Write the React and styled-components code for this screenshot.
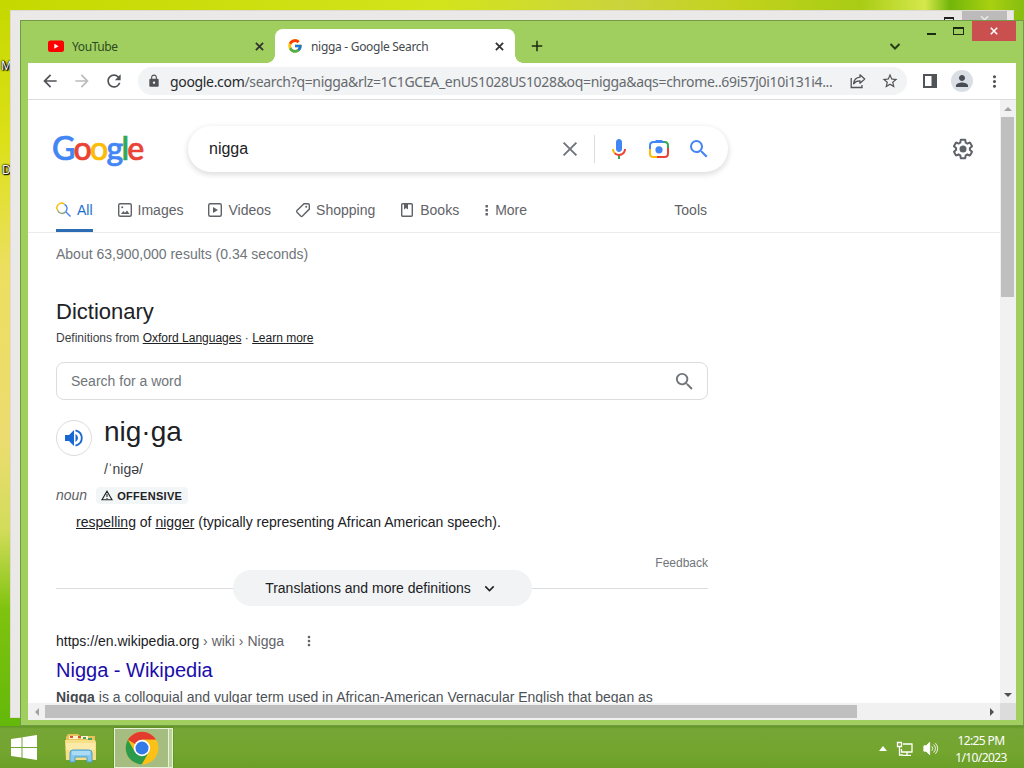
import * as React from "react";
import styled, { createGlobalStyle, css } from "styled-components";
import {
  MdArrowBack,
  MdArrowForward,
  MdRefresh,
  MdLock,
  MdStarBorder,
  MdPerson,
  MdMoreVert,
  MdAdd,
  MdSearch,
  MdKeyboardArrowDown,
} from "react-icons/md";
import { FcGoogle } from "react-icons/fc";

const GlobalStyle = createGlobalStyle`
  * { box-sizing: border-box; }
  body {
    margin: 0;
    overflow: hidden;
    font-family: "Liberation Sans", Arial, sans-serif;
  }
`;

const Desktop = styled.div`
  position: relative;
  width: 1024px;
  height: 768px;
  overflow: hidden;
  background: linear-gradient(180deg, #c5d800 0, #dce018 140px, #ecdf60 270px, #ecdc70 440px, #d2dc5a 530px, #7fc30e 610px, #63b80a 727px);
`;
const SkyStrip = styled.div`
  height: 20px;
  background: linear-gradient(90deg, #c5d900 0, #d3e41c 440px, #cbd43c 620px, #c2d21c 740px, #a8cc14 860px, #d6e84c 925px, #72b50a 950px, #a8d010 990px, #86bd10 1024px);
`;
const DesktopLabel = styled.span`
  position: absolute;
  left: ${(p) => p.$x}px;
  top: ${(p) => p.$y}px;
  font: 12px "Open Sans", sans-serif;
  color: #fff;
  text-shadow: 0 0 2px #000, 1px 1px 1px #000, 0 0 2px #000, 1px 0 1px #000;
`;
const BackWindow = styled.div`
  position: absolute;
  left: 10px;
  top: 10px;
  width: 1004px;
  height: 708px;
  background: #ebe8e8;
  border: 1px solid #ded9d3;
  display: flex;
  justify-content: flex-end;
  padding-right: 6px;
`;
const BackMax = styled.div`
  width: 10px;
  height: 8px;
  margin: 6px 8px 0 0;
  border: 1px solid #222;
  border-top-width: 2px;
`;
const BackClose = styled.div`
  width: 45px;
  height: 20px;
  background: #bcbaba;
  color: #eee;
  text-align: center;
  font-size: 18px;
  line-height: 18px;
`;
const Window = styled.div`
  position: absolute;
  left: 20px;
  top: 20px;
  width: 1004px;
  height: 706px;
  padding: 0 7px 6px;
  background: #a0cf60;
  border: 1px solid #719c45;
  display: flex;
  flex-direction: column;
`;
const TabStrip = styled.div`
  height: 42px;
  flex: none;
  display: flex;
  align-items: flex-end;
`;
const uiText = css`
  font-family: "Noto Sans", "Open Sans", sans-serif;
`;
const Tab = styled.div`
  ${uiText}
  position: relative;
  width: ${(p) => p.$width}px;
  height: 34px;
  padding: 0 11px 0 ${(p) => (p.$active ? 12 : 20)}px;
  display: flex;
  align-items: center;
  gap: 8px;
  font-size: 12px;
  letter-spacing: ${(p) => (p.$active ? "-0.3px" : "-0.4px")};
  color: ${(p) => (p.$active ? "#45494d" : "#2c4a22")};
  background: ${(p) => (p.$active ? "#fff" : "transparent")};
  border-radius: 8px 8px 0 0;
  svg:last-child { margin-left: auto; color: #222; }
  ${(p) =>
    p.$active &&
    css`
      &::before, &::after {
        content: "";
        position: absolute;
        bottom: 0;
        width: 8px;
        height: 8px;
      }
      &::before {
        left: -8px;
        background: radial-gradient(circle at 0 0, transparent 7.5px, #fff 8px);
      }
      &::after {
        right: -8px;
        background: radial-gradient(circle at 100% 0, transparent 7.5px, #fff 8px);
      }
    `}
`;
const NewTab = styled.div`
  width: 44px;
  height: 34px;
  display: flex;
  align-items: center;
  justify-content: center;
  color: #1c2a12;
`;
const Spacer = styled.div`
  flex: 1;
`;
const TabSearch = styled.div`
  width: 16px;
  height: 34px;
  margin-right: 15px;
  display: flex;
  align-items: center;
`;
const Caption = styled.div`
  align-self: flex-start;
  width: ${(p) => (p.$close ? 44 : 27)}px;
  height: 20px;
  display: flex;
  align-items: center;
  justify-content: center;
  background: ${(p) => (p.$close ? "#c9504f" : "transparent")};
`;
const Toolbar = styled.div`
  height: 37px;
  flex: none;
  padding: 0 6px;
  display: flex;
  align-items: center;
  background: #fff;
  border-bottom: 1px solid #dadce0;
`;
const ToolButton = styled.div`
  width: 32px;
  height: 28px;
  flex: none;
  display: flex;
  align-items: center;
  justify-content: center;
  color: ${(p) => (p.$dim ? "#babcbe" : "#505357")};
`;
const Omnibox = styled.div`
  ${uiText}
  width: 769px;
  height: 28px;
  margin: 0 7px 0 8px;
  padding: 0 1px 0 9px;
  border-radius: 14px;
  background: #f1f3f4;
  display: flex;
  align-items: center;
  color: #505357;
`;
const Url = styled.div`
  width: 672px;
  margin-left: 9px;
  font-size: 14px;
  letter-spacing: -0.33px;
  white-space: nowrap;
  color: #666a6e;
  b { font-weight: 400; color: #25282b; }
`;
const Avatar = styled.div`
  width: 22px;
  height: 22px;
  border-radius: 50%;
  background: #dadfe5;
  color: #474c55;
  display: flex;
  align-items: center;
  justify-content: center;
`;
const Viewport = styled.div`
  flex: 1;
  min-height: 0;
  display: grid;
  grid-template: 603px 1fr / 972px 16px;
  background: #f1f1f1;
`;
const Page = styled.div`
  background: #fff;
  overflow: hidden;
`;
const Header = styled.div`
  height: 133px;
  padding-top: 26px;
  border-bottom: 1px solid #ebebeb;
`;
const SearchRow = styled.div`
  height: 46px;
  padding: 0 25px 0 24px;
  display: flex;
  align-items: center;
`;
const Logo = styled.div`
  width: 136px;
  flex: none;
  font: 500 32px/38px Lato, sans-serif;
  letter-spacing: -1.7px;
  padding-bottom: 2px;
`;
const Letter = styled.span`
  color: ${(p) => p.$color};
  -webkit-text-stroke: 0.7px ${(p) => p.$color};
`;
const SearchBox = styled.div`
  width: 540px;
  height: 46px;
  padding: 0 17px 0 21px;
  border-radius: 23px;
  box-shadow: 0 2px 5px 1px rgba(64, 60, 67, 0.16);
  display: flex;
  align-items: center;
  font-size: 16px;
  color: #202124;
  svg { flex: none; }
`;
const Divider = styled.div`
  width: 1px;
  height: 28px;
  margin: 0 12px 0 16px;
  background: #dadce0;
`;
const SearchIcons = styled.div`
  display: flex;
  gap: 16px;
`;
const Nav = styled.div`
  height: 60px;
  padding: 16px 0 0 28px;
  width: 679px;
  display: flex;
  gap: 24px;
`;
const NavItem = styled.div`
  height: 44px;
  padding-top: 2px;
  display: flex;
  align-items: center;
  gap: 5px;
  font-size: 14px;
  color: ${(p) => (p.$active ? "#1a6fcf" : "#5f6368")};
  border-bottom: 3px solid ${(p) => (p.$active ? "#2b6cb5" : "transparent")};
  margin-left: ${(p) => (p.$last ? "auto" : 0)};
`;
const Column = styled.div`
  width: 652px;
  margin-left: 28px;
  color: #202124;
  font-size: 14px;
`;
const Stats = styled.div`
  height: 42px;
  line-height: 42px;
  color: #70757a;
`;
const Heading = styled.div`
  margin-top: 24px;
  font-size: 22px;
  line-height: 26px;
`;
const Source = styled.div`
  margin-top: 5px;
  font-size: 12px;
  line-height: 16px;
  color: #3c4043;
  u { color: #202124; text-underline-offset: 1px; }
`;
const WordSearch = styled.div`
  height: 38px;
  margin-top: 16px;
  padding: 0 11px 0 14px;
  border: 1px solid #dadce0;
  border-radius: 8px;
  display: flex;
  align-items: center;
  justify-content: space-between;
  color: #70757a;
`;
const Entry = styled.div`
  height: 83px;
  padding-top: 14px;
  display: flex;
  gap: 12px;
`;
const Speaker = styled.div`
  width: 36px;
  height: 36px;
  margin-top: 6px;
  border: 1px solid #dadce0;
  border-radius: 50%;
  display: flex;
  align-items: center;
  justify-content: center;
`;
const Word = styled.div`
  font-size: 28px;
  line-height: 36px;
`;
const Phonetic = styled.div`
  margin-top: 10px;
  line-height: 18px;
  color: #3c4043;
`;
const PartOfSpeech = styled.div`
  height: 24px;
  display: flex;
  align-items: center;
  gap: 9px;
  color: #5f6368;
`;
const Label = styled.span`
  height: 17px;
  margin-top: 1px;
  padding: 0 6px 0 5px;
  border-radius: 4px;
  background: #f3f6f7;
  display: flex;
  align-items: center;
  gap: 4px;
  font-size: 11px;
  font-weight: 700;
  letter-spacing: 0.3px;
  color: #202124;
`;
const Definition = styled.div`
  padding: 7px 0 0 20px;
  line-height: 16px;
  u { text-underline-offset: 1px; }
`;
const Feedback = styled.div`
  margin-top: 25px;
  text-align: right;
  font-size: 12px;
  line-height: 16px;
  color: #70757a;
`;
const Expander = styled.div`
  height: 36px;
  margin-top: -1px;
  display: flex;
  align-items: center;
  &::before, &::after {
    content: "";
    flex: 1;
    height: 1px;
    background: #dadce0;
  }
`;
const ExpandButton = styled.div`
  width: 299px;
  height: 36px;
  border-radius: 18px;
  background: #f1f3f4;
  display: flex;
  align-items: center;
  justify-content: center;
  gap: 9px;
`;
const Cite = styled.div`
  margin-top: 25px;
  height: 20px;
  display: flex;
  align-items: center;
  white-space: pre;
  span { color: #5f6368; margin-right: 17px; }
  svg { color: #5f6368; }
`;
const ResultTitle = styled.div`
  margin-top: 6px;
  font-size: 20px;
  line-height: 27px;
  color: #1a0dab;
`;
const Snippet = styled.div`
  margin-top: 3px;
  line-height: 20px;
  color: #4d5156;
  white-space: nowrap;
  b { color: #45494d; }
`;
const Scrollbar = styled.div`
  display: flex;
  flex-direction: ${(p) => (p.$vertical ? "column" : "row")};
  align-items: center;
  justify-content: space-between;
  padding-right: ${(p) => (p.$vertical ? 1 : 0)}px;
  background: #f1f1f1;
`;
const Thumb = styled.div`
  ${(p) =>
    p.$vertical
      ? css`width: 13px; height: 180px; margin-bottom: auto;`
      : css`width: 812px; height: 13px; margin-right: auto;`}
  background: #bfbfbf;
`;
const ScrollArrow = styled.div`
  width: 17px;
  height: 17px;
  display: flex;
  align-items: center;
  justify-content: center;
  svg { transform: rotate(${(p) => p.$turn}deg); }
`;
const Corner = styled.div`
  background: #dcdcdc;
`;
const Taskbar = styled.div`
  position: absolute;
  left: 0;
  top: 726px;
  width: 1024px;
  height: 42px;
  padding: 1px 16px 0 10px;
  background: linear-gradient(180deg, #5f9424 0, #76a636 3px, #73a52f 60%, #6a9f28);
  display: flex;
  align-items: center;
`;
const Pinned = styled.div`
  width: 36px;
  margin: 2px 15px 0 26px;
  display: flex;
  justify-content: center;
`;
const Running = styled.div`
  width: 59px;
  height: 40px;
  border: 1px solid #e6f2d6;
  background: #bad19b;
  display: flex;
  box-shadow: 0 0 1px #335511;
`;
const RunningMain = styled.div`
  width: 54px;
  border-right: 1px solid #e6f2d6;
  background: #a5bd80;
  display: flex;
  align-items: center;
  justify-content: center;
`;
const Tray = styled.div`
  display: flex;
  align-items: center;
  gap: 8px;
  margin: 2px 15px 0 0;
`;
const Clock = styled.div`
  ${uiText}
  width: 54px;
  text-align: center;
  white-space: nowrap;
  font-size: 12px;
  line-height: 17px;
  letter-spacing: -0.6px;
  padding-top: 3px;
  color: #fff;
`;

const Cross = ({ size, color = "#333", width = 2 }) => (
  <svg width={size} height={size} viewBox="0 0 10 10" stroke={color} strokeWidth={width}>
    <path d="M1 1 9 9M9 1 1 9" />
  </svg>
);

const Arrow = ({ turn, color }) => (
  <ScrollArrow $turn={turn}>
    <svg width="8" height="4" viewBox="0 0 8 4">
      <path d="M0 4 4 0 8 4Z" fill={color} />
    </svg>
  </ScrollArrow>
);

const YouTubeIcon = () => (
  <svg width="16" height="16" viewBox="0 0 16 16">
    <rect y="2.5" width="16" height="11.5" rx="2.5" fill="#f00" />
    <path d="M6.3 5.8v5l4.3-2.5Z" fill="#fff" />
  </svg>
);

const ShareIcon = () => (
  <svg width="16" height="16" viewBox="0 0 16 16" fill="none" stroke="currentColor" strokeWidth="1.3">
    <path d="M1.2 5v9.5H12V12" />
    <path d="M10 1.8 14.7 6 10 10.2V7.8C7 7.7 5 8.8 3.6 10.8 4 7 6.4 4.5 10 4.2Z" strokeLinejoin="round" />
  </svg>
);

const MicIcon = () => (
  <svg width="24" height="24" viewBox="0 0 24 24">
    <path fill="#4285f4" d="M12 15c1.66 0 3-1.31 3-2.97V5.01C15 3.35 13.66 2 12 2S9 3.34 9 5.01v7.02C9 13.69 10.34 15 12 15z" />
    <path fill="#34a853" d="M11 18.08h2V22h-2z" />
    <path fill="#fbbc04" d="M7.05 16.87C5.78 15.54 5 14.04 5 12h2c0 1.45.56 2.42 1.47 3.38v.32l-1.15 1.18z" />
    <path fill="#ea4335" d="M12 16.93a4.97 5.25 0 0 1-3.54-1.55l-1.41 1.49C8.31 18.21 10.07 19 12 19c3.87 0 6.99-2.92 6.99-7H17c0 2.92-2.24 4.93-5 4.93z" />
  </svg>
);

const LensIcon = () => (
  <svg width="24" height="24" viewBox="0 0 24 24" fill="none" strokeWidth="2">
    <path stroke="#4285f4" d="M3 12V8.500C3 6.500 4.500 5 6.500 5H17" />
    <path fill="#4285f4" d="M7 5.500 9 3h6l2 2.500Z" />
    <path stroke="#34a853" d="M16.500 5h1C19.500 5 21 6.500 21 8.500V11" />
    <path stroke="#fbbc04" d="M3 12v4.500C3 18.500 4.500 20 6.500 20H10" />
    <path stroke="#ea4335" d="M10 20h7.500c2 0 3.500-1.500 3.500-3.500V11" />
    <circle cx="12" cy="12.800" r="3.600" fill="#4285f4" />
  </svg>
);

const GearIcon = () => (
  <svg width="24" height="24" viewBox="0 0 24 24" fill="#5f6368">
    <path d="M13.85 22.25h-3.7c-.74 0-1.36-.54-1.45-1.27l-.27-1.89c-.27-.14-.53-.29-.79-.46l-1.8.72c-.7.26-1.47-.03-1.81-.65L2.2 15.53c-.35-.66-.2-1.44.36-1.88l1.53-1.19c-.01-.15-.02-.3-.02-.46 0-.15.01-.31.02-.46l-1.52-1.19c-.59-.45-.74-1.26-.37-1.88l1.85-3.19c.34-.62 1.11-.9 1.79-.63l1.81.73c.26-.17.52-.32.78-.46l.27-1.91c.09-.7.71-1.25 1.44-1.25h3.7c.74 0 1.36.54 1.45 1.27l.27 1.89c.27.14.53.29.79.46l1.8-.72c.71-.26 1.48.03 1.82.65l1.84 3.18c.36.66.2 1.44-.36 1.88l-1.52 1.19c.01.15.02.3.02.46s-.01.31-.02.46l1.52 1.19c.56.45.72 1.23.37 1.86l-1.86 3.22c-.34.62-1.11.9-1.8.63l-1.8-.72c-.26.17-.52.32-.78.46l-.27 1.91c-.1.68-.72 1.22-1.46 1.22zm-3.23-2h2.76l.37-2.55.53-.22c.44-.18.88-.44 1.34-.78l.45-.34 2.38.96 1.38-2.4-2.03-1.58.07-.56c.03-.26.06-.51.06-.78s-.03-.53-.06-.78l-.07-.56 2.03-1.58-1.39-2.4-2.39.96-.45-.35c-.42-.32-.87-.58-1.33-.77l-.52-.22-.37-2.55h-2.76l-.37 2.55-.53.21c-.44.19-.88.44-1.34.79l-.45.33-2.38-.95-1.39 2.39 2.03 1.58-.07.56a7 7 0 0 0-.06.79c0 .26.02.53.06.78l.07.56-2.03 1.58 1.38 2.4 2.39-.96.45.35c.43.33.86.58 1.33.77l.53.22.38 2.55z" />
    <circle cx="12" cy="12" r="3.5" />
  </svg>
);

const NavIcon = ({ children }) => (
  <svg width="16" height="16" viewBox="0 0 16 16" fill="none" stroke="#5f6368" strokeWidth="1.4">
    {children}
  </svg>
);

const FolderIcon = () => (
  <svg width="34" height="32" viewBox="0 0 34 32">
    <path d="M2 4 4 1h10l2 2h15v23H2Z" fill="#e7c35c" />
    <path d="M5 3h9v3H5zM17 3h7v3h-7z" fill="#fff5cf" />
    <path d="M6 3h3v2H6zM14 3h3v2h-3z" fill="#d3532e" />
    <path d="M19 4h3v2h-3zM24 5h4v2h-4z" fill="#45a35b" />
    <path d="M1 7h30l1 2v18H2Z" fill="#f6df86" />
    <path d="M2 10h29v7H2z" fill="#fbeaa8" />
    <path d="M6 29v-9q0-3 3-3h16q3 0 3 3v9h-5v-5H11v5Z" fill="#86c9ec" stroke="#4f9fca" />
    <path d="M8 19h18M8 21h18" stroke="#d1effb" />
  </svg>
);

const ChromeIcon = () => (
  <svg width="34" height="34" viewBox="0 0 48 48">
    <circle cx="24" cy="24" r="23" fill="#fbc116" />
    <path d="M24 24 4.1 12.5A23 23 0 0 1 43.9 12.500H24Z" fill="#e33b2e" />
    <path d="M4.1 12.5A23 23 0 0 0 24 47L34 29.700 24 35 14 29.700Z" fill="#2c9a4b" />
    <path d="M24 47A23 23 0 0 0 43.9 12.500H24L34 29.700Z" fill="#fbc116" />
    <circle cx="24" cy="24" r="11.500" fill="#fff" />
    <circle cx="24" cy="24" r="9.200" fill="#3379e8" />
  </svg>
);

const logoLetters = [
  ["G", "#4285f4"],
  ["o", "#ea4335"],
  ["o", "#fbbc05"],
  ["g", "#4285f4"],
  ["l", "#34a853"],
  ["e", "#ea4335"],
];

function BrowserTabs() {
  return (
    <TabStrip>
      <Tab $width={247}>
        <YouTubeIcon />
        YouTube
        <Cross size={9} />
      </Tab>
      <Tab $width={240} $active>
        <FcGoogle size={16} />
        nigga - Google Search
        <Cross size={9} />
      </Tab>
      <NewTab>
        <MdAdd size={18} />
      </NewTab>
      <Spacer />
      <TabSearch>
        <svg width="16" height="16" fill="none" stroke="#243d12" strokeWidth="2">
          <path d="m3.500 6 4.500 4.500L12.500 6" />
        </svg>
      </TabSearch>
      <Caption>
        <svg width="9" height="10"><path d="M0 7h9v2H0z" fill="#1c2a12" /></svg>
      </Caption>
      <Caption>
        <svg width="11" height="10"><path d="M0 1h11v8H0zM1 3v5h9V3z" fill="#1c2a12" fillRule="evenodd" /></svg>
      </Caption>
      <Caption $close>
        <Cross size={8} color="#fff" />
      </Caption>
    </TabStrip>
  );
}

function BrowserToolbar() {
  return (
    <Toolbar>
      <ToolButton><MdArrowBack size={20} /></ToolButton>
      <ToolButton $dim><MdArrowForward size={20} /></ToolButton>
      <ToolButton><MdRefresh size={20} /></ToolButton>
      <Omnibox>
        <MdLock size={14} />
        <Url>
          <b>google.com</b>/search?q=nigga&amp;rlz=1C1GCEA_enUS1028US1028&amp;oq=nigga&amp;aqs=chrome..69i57j0i10i131i4...
        </Url>
        <Spacer />
        <ToolButton><ShareIcon /></ToolButton>
        <ToolButton><MdStarBorder size={18} /></ToolButton>
      </Omnibox>
      <ToolButton>
        <svg width="14" height="14"><path d="M0 0h14v14H0zM2 2v10h6.500V2z" fill="currentColor" fillRule="evenodd" /></svg>
      </ToolButton>
      <ToolButton>
        <Avatar><MdPerson size={18} /></Avatar>
      </ToolButton>
      <ToolButton><MdMoreVert size={19} /></ToolButton>
    </Toolbar>
  );
}

function SearchHeader() {
  return (
    <Header>
      <SearchRow>
        <Logo>
          {logoLetters.map(([letter, color], i) => (
            <Letter key={i} $color={color}>{letter}</Letter>
          ))}
        </Logo>
        <SearchBox>
          nigga
          <Spacer />
          <Cross size={16} color="#70757a" width={1.2} />
          <Divider />
          <SearchIcons>
            <MicIcon />
            <LensIcon />
            <MdSearch size={24} color="#4285f4" />
          </SearchIcons>
        </SearchBox>
        <Spacer />
        <GearIcon />
      </SearchRow>
      <Nav>
        <NavItem $active>
          <svg width="16" height="16" viewBox="0 0 16 16" fill="none" strokeWidth="1.4">
            <path d="M1.8 8.5A4.600 4.600 0 0 1 8.500 2.300" stroke="#fbbc04" />
            <path d="M8.500 2.300A4.600 4.600 0 0 1 9.600 9.800" stroke="#4285f4" />
            <path d="M9.600 9.800A4.600 4.600 0 0 1 1.800 8.500" stroke="#8fa27c" />
            <path d="m9.800 9.800 4.700 4.700" stroke="#4285f4" />
          </svg>
          All
        </NavItem>
        <NavItem>
          <NavIcon>
            <rect x="1.7" y="1.7" width="12.6" height="12.6" rx="1.5" />
            <path d="m4 12 2.300-3 1.600 1.800L10 8.500l2.500 3.500Z" fill="#5f6368" stroke="none" />
            <circle cx="5.2" cy="5.2" r="1" fill="#5f6368" stroke="none" />
          </NavIcon>
          Images
        </NavItem>
        <NavItem>
          <NavIcon>
            <rect x="1.7" y="1.7" width="12.6" height="12.6" rx="1.5" />
            <path d="m6 5 5 3-5 3Z" fill="#5f6368" stroke="none" />
          </NavIcon>
          Videos
        </NavItem>
        <NavItem>
          <NavIcon>
            <path d="M9 1.800h4q1.300 0 1.300 1.300v4L7.500 14q-.9.800-1.800 0L2 10.300q-.8-.9 0-1.800Z" />
            <circle cx="11.2" cy="4.8" r="1" fill="#5f6368" stroke="none" />
          </NavIcon>
          Shopping
        </NavItem>
        <NavItem>
          <NavIcon>
            <rect x="2.7" y="1.7" width="10.6" height="12.6" rx="1" />
            <path d="M5 2h4v5.500L7 6 5 7.500Z" fill="#5f6368" stroke="none" />
          </NavIcon>
          Books
        </NavItem>
        <NavItem>
          <svg width="7" height="14" fill="#5f6368">
            <path d="M2.500 2h2.400v2.400H2.500zM2.500 6h2.400v2.400H2.500zM2.500 10h2.400v2.400H2.500z" />
          </svg>
          More
        </NavItem>
        <NavItem $last>Tools</NavItem>
      </Nav>
    </Header>
  );
}

function Results() {
  return (
    <Column>
      <Stats>About 63,900,000 results (0.34 seconds)</Stats>
      <Heading>Dictionary</Heading>
      <Source>
        Definitions from <u>Oxford Languages</u> · <u>Learn more</u>
      </Source>
      <WordSearch>
        Search for a word
        <MdSearch size={23} />
      </WordSearch>
      <Entry>
        <Speaker>
          <svg width="18" height="18" viewBox="0 0 18 18" fill="#1967d2">
            <path d="M0 6v6h4l5 5V1L4 6ZM10.500 5v8q2.500-1.300 2.500-4t-2.500-4Z" />
            <path d="M10.500 1.300q6.300 1.700 6.300 7.700t-6.300 7.700" fill="none" stroke="#1967d2" strokeWidth="1.8" />
          </svg>
        </Speaker>
        <div>
          <Word>nig·ga</Word>
          <Phonetic>/ˈnigə/</Phonetic>
        </div>
      </Entry>
      <PartOfSpeech>
        <i>noun</i>
        <Label>
          <svg width="12" height="11" viewBox="0 0 12 11" fill="none" stroke="#202124" strokeWidth="1.1">
            <path d="M6 1.200 11 9.800H1ZM6 4v3M6 8v1" />
          </svg>
          OFFENSIVE
        </Label>
      </PartOfSpeech>
      <Definition>
        <u>respelling</u> of <u>nigger</u> (typically representing African American speech).
      </Definition>
      <Feedback>Feedback</Feedback>
      <Expander>
        <ExpandButton>
          Translations and more definitions
          <MdKeyboardArrowDown size={19} />
        </ExpandButton>
      </Expander>
      <Cite>
        https://en.wikipedia.org<span> › wiki › Nigga</span>
        <MdMoreVert size={16} />
      </Cite>
      <ResultTitle>Nigga - Wikipedia</ResultTitle>
      <Snippet>
        <b>Nigga</b> is a colloquial and vulgar term used in African-American Vernacular English that began as
      </Snippet>
    </Column>
  );
}

function SystemTaskbar() {
  return (
    <Taskbar>
      <svg width="27" height="27" viewBox="0 0 27 27" fill="#fff">
        <path d="M1 5 11.500 3.400V13H1ZM12.500 3.200 27 1v12H12.500ZM1 14h10.500v9.600L1 22ZM12.500 14H27v12l-14.500-2.200Z" />
      </svg>
      <Pinned><FolderIcon /></Pinned>
      <Running>
        <RunningMain>
          <ChromeIcon />
        </RunningMain>
      </Running>
      <Spacer />
      <Tray>
        <svg width="8" height="5"><path d="M0 5 4 0l4 5z" fill="#fff" /></svg>
        <svg width="20" height="16" viewBox="0 0 20 16" fill="none" stroke="#fff" strokeWidth="1.3">
          <path d="M8 3h9v8H6.500V8M12 11v3M8 14.300h8M4.500 6v8H8M2.500 1.500h4V5.500h-4z" />
        </svg>
        <svg width="16" height="15" viewBox="0 0 18 16" fill="none" stroke="#fff">
          <path d="M1 5v6h2.500l4 4V1l-4 4Z" fill="#fff" />
          <path d="M10 5.500q2 2.500 0 5M12 3.500q4 4.500 0 9M14 2q5 6 0 12" />
        </svg>
      </Tray>
      <Clock>
        12:25 PM
        <br />
        1/10/2023
      </Clock>
    </Taskbar>
  );
}

export default function App() {
  return (
    <Desktop>
      <GlobalStyle />
      <SkyStrip />
      <DesktopLabel $x={1} $y={57}>M</DesktopLabel>
      <DesktopLabel $x={2} $y={161}>D</DesktopLabel>
      <BackWindow>
        <BackMax />
        <BackClose>×</BackClose>
      </BackWindow>
      <Window>
        <BrowserTabs />
        <BrowserToolbar />
        <Viewport>
          <Page>
            <SearchHeader />
            <Results />
          </Page>
          <Scrollbar $vertical>
            <Arrow turn={0} color="#a3a3a3" />
            <Thumb $vertical />
            <Arrow turn={180} color="#505050" />
          </Scrollbar>
          <Scrollbar>
            <Arrow turn={-90} color="#a3a3a3" />
            <Thumb />
            <Arrow turn={90} color="#505050" />
          </Scrollbar>
          <Corner />
        </Viewport>
      </Window>
      <SystemTaskbar />
    </Desktop>
  );
}
